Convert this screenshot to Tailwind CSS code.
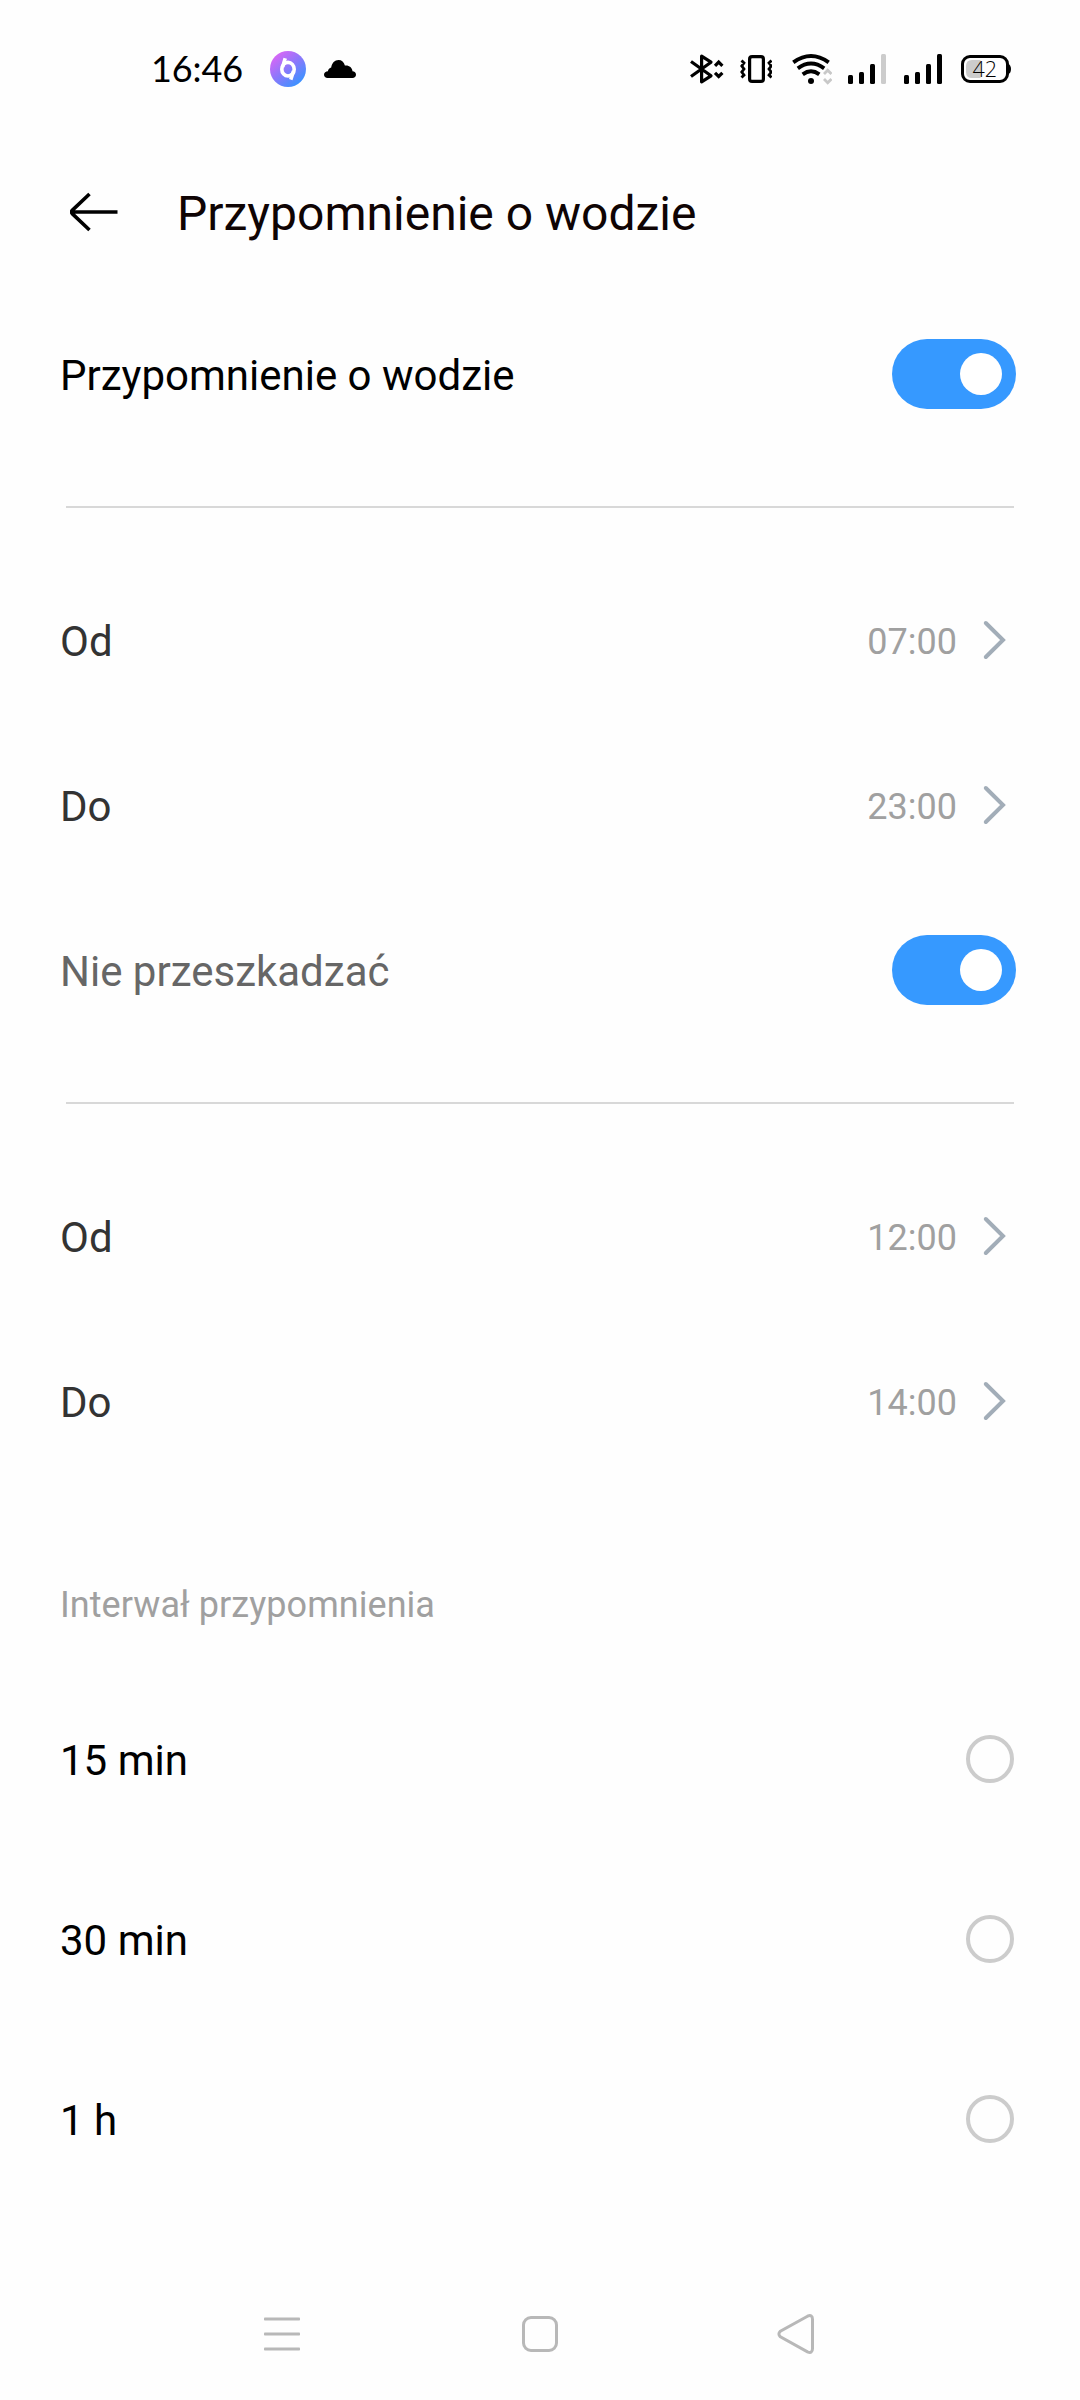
<!DOCTYPE html>
<html lang="pl">
<head>
<meta charset="utf-8">
<title>Przypomnienie o wodzie</title>
<script src="https://cdn.jsdelivr.net/npm/@tailwindcss/browser@4"></script>
</head>
<body class="bg-[#fefefe]">
<div class="flex h-[2400px] w-[1080px] flex-col overflow-hidden bg-[#fefefe] font-['Roboto',sans-serif] text-[42px] leading-[50px] text-black">

  <!-- Status bar -->
  <div class="flex h-[138px] shrink-0 items-center justify-between pr-[68px] pl-[151px]">
    <div class="flex items-center">
      <span class="-mt-[2px] w-[119px] font-['Lato',sans-serif] text-[36px] leading-[44px] tracking-[-0.1px]">16:46</span>
      <svg class="h-9 w-9" viewBox="0 0 36 36">
        <defs><linearGradient id="g" x1="0.15" y1="0.1" x2="0.8" y2="0.9"><stop offset="0" stop-color="#d966f6"/><stop offset="0.5" stop-color="#8a78fb"/><stop offset="1" stop-color="#3d92ff"/></linearGradient></defs>
        <circle cx="18" cy="18" r="18" fill="url(#g)"/>
        <g fill="none" stroke="#fff" stroke-width="3.600"><ellipse cx="18" cy="18.200" rx="6.200" ry="6.800"/><path d="M15.200 7.200 L12.600 16"/><path d="M23.500 20 L20.800 28.600"/></g>
      </svg>
      <svg class="ml-[18px] h-[18px] w-8" viewBox="0 0 32 18"><path d="M3.500 18 C1.500 18 0 16.600 0 14.700 C0 12.500 2 11.500 3.900 11.300 C4.300 9 5.600 8 7.200 7.600 C7.800 3 10.800 0 14.500 0 C17.800 0 20 2 20.900 5.600 C24.700 5 28.300 7.500 28.500 11.300 C30.600 11.500 32 12.700 32 14.700 C32 16.600 30.500 18 28.500 18 Z"/></svg>
    </div>
    <div class="flex items-center">
      <svg class="h-8 w-[34px]" viewBox="690 53 34 32" fill="none" stroke="#000" stroke-width="3.200"><path d="M691 61.500 L711 75.800 L701.600 81.800 V56.200 L711 62.200 L691 76.500" stroke-linejoin="round"/><path d="M715 65.800 L718.700 62.100 L722.400 65.800 M715 72.800 L718.700 76.500 L722.400 72.800"/></svg>
      <svg class="ml-4 h-8 w-8" viewBox="740 53 32 32" fill="none" stroke="#000" stroke-width="3.200"><rect x="749.600" y="56.600" width="13.800" height="24.800" rx="2.500"/><path stroke-width="2.800" d="M741.500 60.500 L744 63 L741.800 66 L744 69 L741.800 72 L744 75 L741.500 77.500 M771.500 60.500 L769 63 L771.200 66 L769 69 L771.200 72 L769 75 L771.500 77.500"/></svg>
      <svg class="ml-5 h-8 w-10" viewBox="792 53 40 32" fill="none" stroke="#000" stroke-width="3.900"><path d="M793.300 62.300 Q811 49.500 828.700 62.300 M797.800 68.300 Q811 58.700 824.200 68.300 M802.700 74.300 Q811 68.300 819.300 74.300"/><circle cx="811" cy="81" r="3" fill="#000" stroke="none"/><path stroke="#c8c8c8" stroke-width="2.800" d="M824 74 L827.700 70.300 L831.400 74 M824 79 L827.700 82.700 L831.400 79"/></svg>
      <svg class="ml-4 h-8 w-[38px]" viewBox="848 53 38 32"><rect x="848" y="75" width="5" height="9" rx="1.500"/><rect x="859" y="72" width="5" height="12" rx="1.500"/><rect x="870" y="64" width="5" height="20" rx="1.500"/><rect x="881" y="54" width="5" height="30" rx="1.500" fill="#ccc"/></svg>
      <svg class="ml-[18px] h-8 w-[38px]" viewBox="848 53 38 32"><rect x="848" y="75" width="5" height="9" rx="1.500"/><rect x="859" y="72" width="5" height="12" rx="1.500"/><rect x="870" y="64" width="5" height="20" rx="1.500"/><rect x="881" y="54" width="5" height="30" rx="1.500"/></svg>
      <svg class="ml-[19px] h-8 w-[51px]" viewBox="961 53 51 32"><path d="M980.500 60 H972 Q966 60 966 66 V72 Q966 78 972 78 H980.500 Z" fill="#ccc"/><rect x="962.500" y="56.500" width="45" height="25" rx="7.500" fill="none" stroke="#000" stroke-width="3"/><path d="M1008 63.500 Q1011 65 1011 69 Q1011 73 1008 74.500 Z"/><text x="972.500" y="77" font-family="Open Sans, sans-serif" font-weight="300" font-size="21.500">42</text></svg>
    </div>
  </div>

  <!-- Header -->
  <header class="flex h-[150px] shrink-0 items-center pl-[70px]">
    <svg class="-mt-[2px] h-10 w-[50px]" viewBox="0 0 50 40" fill="none" stroke="#000" stroke-width="3.600"><path d="M47.500 20 H2 M19.500 2 L2.200 18.400 Q0.800 20 2.200 21.600 L19.500 38" stroke-linejoin="round"/></svg>
    <h1 class="mt-[2px] ml-[57px] text-[48px] leading-[58px] text-[#0f0404]">Przypomnienie o wodzie</h1>
  </header>

  <main class="flex flex-col">
    <div class="flex h-[174px] items-center justify-between pr-16 pl-[60px]">
      <span class="mt-[2px]">Przypomnienie o wodzie</span>
      <div class="-mt-[2px] flex h-[70px] w-[124px] items-center justify-end rounded-full bg-[#3699ff] pr-[14px]"><div class="h-[42px] w-[42px] rounded-full bg-white"></div></div>
    </div>
    <div class="mx-[66px] mt-[44px] mb-[51px] h-[2px] bg-[#d8d8d8]"></div>

    <div class="flex h-[165px] items-center pr-[74px] pl-[60px] text-[#333]">
      <span class="grow">Od</span><span class="text-[36px] text-[#a0a0a0]">07:00</span>
      <svg class="-mt-[3px] ml-[25px] h-10 w-6" viewBox="0 0 24 40" fill="none" stroke="#a2adb8" stroke-width="4" stroke-linecap="round"><path d="M3.800 3 L21 20 L3.800 37"/></svg>
    </div>
    <div class="flex h-[165px] items-center pr-[74px] pl-[60px] text-[#333]">
      <span class="grow">Do</span><span class="text-[36px] text-[#a0a0a0]">23:00</span>
      <svg class="-mt-[3px] ml-[25px] h-10 w-6" viewBox="0 0 24 40" fill="none" stroke="#a2adb8" stroke-width="4" stroke-linecap="round"><path d="M3.800 3 L21 20 L3.800 37"/></svg>
    </div>
    <div class="flex h-[165px] items-center justify-between pr-16 pl-[60px]">
      <span class="text-[#666]">Nie przeszkadzać</span>
      <div class="-mt-[3px] flex h-[70px] w-[124px] items-center justify-end rounded-full bg-[#3699ff] pr-[14px]"><div class="h-[42px] w-[42px] rounded-full bg-white"></div></div>
    </div>
    <div class="mx-[66px] mt-[48px] mb-[51px] h-[2px] bg-[#d8d8d8]"></div>

    <div class="flex h-[165px] items-center pr-[74px] pl-[60px] text-[#333]">
      <span class="grow">Od</span><span class="text-[36px] text-[#a0a0a0]">12:00</span>
      <svg class="-mt-[3px] ml-[25px] h-10 w-6" viewBox="0 0 24 40" fill="none" stroke="#a2adb8" stroke-width="4" stroke-linecap="round"><path d="M3.800 3 L21 20 L3.800 37"/></svg>
    </div>
    <div class="flex h-[165px] items-center pr-[74px] pl-[60px] text-[#333]">
      <span class="grow">Do</span><span class="text-[36px] text-[#a0a0a0]">14:00</span>
      <svg class="-mt-[3px] ml-[25px] h-10 w-6" viewBox="0 0 24 40" fill="none" stroke="#a2adb8" stroke-width="4" stroke-linecap="round"><path d="M3.800 3 L21 20 L3.800 37"/></svg>
    </div>

    <h2 class="mt-[95px] mb-[40px] pl-[60px] text-[36px] leading-[50px] tracking-[0.05px] text-[#a0a0a0]">Interwał przypomnienia</h2>

    <div class="flex h-[180px] items-center justify-between pr-[66px] pl-[60px]"><span class="mt-[2px]">15 min</span><div class="-mt-[2px] h-12 w-12 rounded-full border-4 border-[#ccc]"></div></div>
    <div class="flex h-[180px] items-center justify-between pr-[66px] pl-[60px]"><span class="mt-[2px]">30 min</span><div class="-mt-[2px] h-12 w-12 rounded-full border-4 border-[#ccc]"></div></div>
    <div class="flex h-[180px] items-center justify-between pr-[66px] pl-[60px]"><span class="mt-[2px]">1 h</span><div class="-mt-[2px] h-12 w-12 rounded-full border-4 border-[#ccc]"></div></div>
  </main>

  <!-- System navigation -->
  <nav class="mt-auto flex h-[132px] shrink-0 items-center justify-between pr-[265px] pl-[264px]">
    <svg class="h-[42px] w-9" viewBox="0 0 36 42" fill="#b8b8b8"><rect y="4.500" width="36" height="3" rx="0.800"/><rect y="19.500" width="36" height="3" rx="0.800"/><rect y="34.500" width="36" height="3" rx="0.800"/></svg>
    <svg class="ml-[2px] h-9 w-9" viewBox="0 0 36 36" fill="none" stroke="#b8b8b8" stroke-width="3"><rect x="1.500" y="1.500" width="33" height="33" rx="7.500"/></svg>
    <svg class="h-10 w-[38px]" viewBox="0 0 38 40" fill="none" stroke="#b8b8b8" stroke-width="3"><path d="M30.500 2.200 L3.400 17.200 Q0.400 20 3.400 22.800 L30.500 37.800 Q35.500 40 35.500 34.500 V5.500 Q35.500 0 30.500 2.200 Z"/></svg>
  </nav>
</div>
</body>
</html>
